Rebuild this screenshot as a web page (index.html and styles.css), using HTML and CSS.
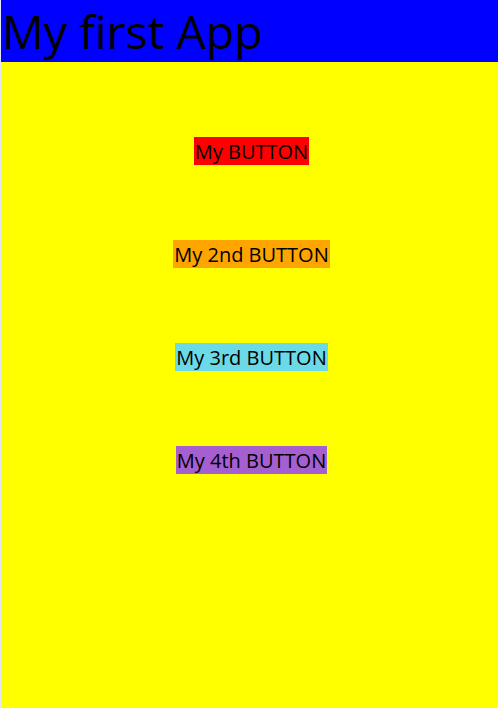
FILE: index.html
```html
<!DOCTYPE html>
<html>
<head>
<meta charset="utf-8">
<link rel="stylesheet" href="styles.css">
</head>
<body>
<div class="app">
  <header class="header">My first App</header>
  <main class="content">
    <button class="btn btn-red">My BUTTON</button>
    <button class="btn btn-orange">My 2nd BUTTON</button>
    <button class="btn btn-cyan">My 3rd BUTTON</button>
    <button class="btn btn-purple">My 4th BUTTON</button>
  </main>
</div>
</body>
</html>
```
FILE: styles.css
```css
html, body {
  margin: 0;
  padding: 0;
  height: 100%;
}
body {
  background: #e4e6f8;
  padding-left: 1px;
  box-sizing: border-box;
  font-family: "Open Sans", "Noto Sans", sans-serif;
}
.app {
  height: 100%;
  display: flex;
  flex-direction: column;
  background: #ffff00;
}
.header {
  height: 62px;
  background: #0000ff;
  color: #000;
  font-size: 46.5px;
  line-height: 62px;
  padding-left: 1px;
  box-sizing: border-box;
  overflow: hidden;
  white-space: nowrap;
}
.content {
  display: flex;
  flex-direction: column;
  align-items: center;
  padding-top: 75px;
  padding-left: 4px;
  gap: 75px;
}
.btn {
  height: 28px;
  border: none;
  margin: 0;
  padding: 1px 1px 0;
  font-family: "Open Sans", "Noto Sans", sans-serif;
  font-size: 20px;
  line-height: 27px;
  color: #000;
  cursor: pointer;
}
.btn-red { background: #ff0000; }
.btn-orange { background: #ffa500; }
.btn-cyan { background: #6cdae6; }
.btn-purple { background: #a65fd0; }
```
